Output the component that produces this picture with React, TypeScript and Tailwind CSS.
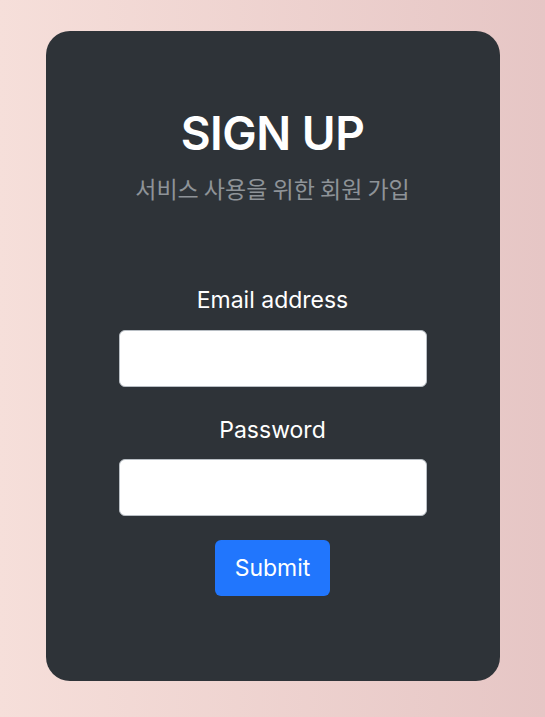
export default function App() {
  return (
    <main
      className="min-h-screen w-full pt-[31px] bg-linear-to-r from-[#f6dfda] to-[#e6c6c5]"
      style={{ fontFamily: "Inter, 'Noto Sans CJK KR', sans-serif" }}
    >
      {/* Card */}
      <div className="mx-auto w-[454px] h-[650px] rounded-[24px] bg-[#2e3338] pt-[75px] flex flex-col items-center">
        <h1 className="text-[46px] leading-[55px] font-semibold text-white tracking-[-0.5px]">SIGN UP</h1>
        <p
          className="mt-[12px] text-[23px] leading-[30px] text-[#8e9398]"
          style={{ fontFamily: "'Noto Sans CJK KR', sans-serif" }}
        >
          서비스 사용을 위한 회원 가입
        </p>

        <form className="mt-[82px] w-[308px] flex flex-col items-center" onSubmit={(e) => e.preventDefault()}>
          <label className="text-[23px] leading-[30px] text-white">Email address</label>
          <input
            type="email"
            className="mt-[15px] w-full h-[57px] rounded-[6px] bg-white border border-[#b8bec4] outline-none px-3"
          />
          <label className="mt-[28px] text-[23px] leading-[30px] text-white">Password</label>
          <input
            type="password"
            className="mt-[14px] w-full h-[57px] rounded-[6px] bg-white border border-[#b8bec4] outline-none px-3"
          />
          <button
            type="submit"
            className="mt-[24px] w-[115px] h-[56px] rounded-[6px] bg-[#2176fd] text-white text-[23px]"
          >
            Submit
          </button>
        </form>
      </div>
    </main>
  );
}
